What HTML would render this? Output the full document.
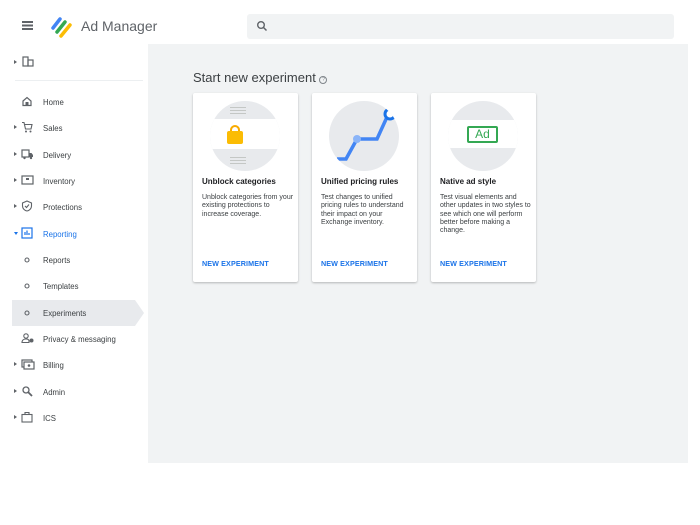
<!DOCTYPE html>
<html><head><style>
*{box-sizing:border-box;margin:0;padding:0}
body{width:700px;height:525px;background:#fff;font-family:"Liberation Sans",Arial,sans-serif;position:relative;overflow:hidden;color:#3c4043}
.abs{position:absolute}
.nav{position:absolute;left:0;width:148px;height:26px;font-size:7.8px;color:#3c4043}
.nav .t{position:absolute;left:43px;top:9px}
.nav .ar{position:absolute;left:14px;top:10px;width:0;height:0;border-top:2.5px solid transparent;border-bottom:2.5px solid transparent;border-left:3px solid #5f6368}
.nav svg{position:absolute;left:21px;top:6px}
.card{position:absolute;top:93px;width:105px;height:189px;background:#fff;box-shadow:0 1px 2px rgba(0,0,0,.25);border-radius:2px}
.card .c{position:absolute;left:17px;top:8px;width:70px;height:70px;border-radius:50%;background:#e8eaed;overflow:hidden}
.card h3{position:absolute;left:9px;top:84px;font-size:8px;font-weight:bold;color:#202124}
.card p{position:absolute;left:9px;top:101px;width:93px;font-size:7px;line-height:8.3px;color:#3c4043}
.card a{position:absolute;left:9px;top:166px;font-size:7.2px;color:#1a73e8;font-weight:bold;letter-spacing:.1px}
</style></head><body>
<div class="abs" style="left:22px;top:21px;width:11px;height:1.5px;background:#5f6368;box-shadow:0 3.5px 0 #5f6368,0 7px 0 #5f6368"></div>
<svg class="abs" style="left:49px;top:15px" width="24" height="24" viewBox="0 0 24 24">
<line x1="4" y1="13" x2="11" y2="4" stroke="#4285f4" stroke-width="3.5" stroke-linecap="round"/>
<line x1="8" y1="17" x2="16" y2="7" stroke="#34a853" stroke-width="3.5" stroke-linecap="round"/>
<line x1="12" y1="21" x2="21" y2="10" stroke="#fbbc04" stroke-width="3.5" stroke-linecap="round"/>
</svg>
<div class="abs" style="left:81px;top:18px;font-size:14px;color:#5f6368">Ad Manager</div>
<div class="abs" style="left:247px;top:14px;width:427px;height:25px;background:#f1f3f4;border-radius:3px"></div>
<svg class="abs" style="left:256px;top:20px" width="12" height="12" viewBox="0 0 12 12"><circle cx="5" cy="5" r="3.3" fill="none" stroke="#5f6368" stroke-width="1.4"/><line x1="7.4" y1="7.4" x2="10.5" y2="10.5" stroke="#5f6368" stroke-width="1.5"/></svg>
<div class="abs" style="left:148px;top:44px;width:540px;height:419px;background:#f1f3f4"></div>
<div class="abs" style="left:14px;top:60px;width:0;height:0;border-top:2.5px solid transparent;border-bottom:2.5px solid transparent;border-left:3px solid #5f6368"></div>
<svg class="abs" style="left:22px;top:56px" width="12" height="11"><rect x="1" y="1" width="5" height="9" fill="none" stroke="#5f6368" stroke-width="1.2"/><rect x="6" y="4" width="5" height="6" fill="none" stroke="#5f6368" stroke-width="1.2"/></svg>
<div class="abs" style="left:15px;top:80px;width:128px;height:1px;background:#eceff1"></div>
<div class="abs" style="left:12px;top:300px;width:123px;height:26px;background:#e8eaed"></div>
<div class="abs" style="left:135px;top:300px;width:0;height:0;border-top:13px solid transparent;border-bottom:13px solid transparent;border-left:9px solid #e8eaed"></div>

<div class="nav" style="top:89px"><svg width="12" height="12"><path d="M2 6L6 2.5L10 6V10.5H2Z" fill="none" stroke="#5f6368" stroke-width="1.2"/><rect x="4.5" y="7" width="3" height="3.5" fill="#5f6368"/></svg><span class="t">Home</span></div>
<div class="nav" style="top:115px"><i class="ar"></i><svg width="12" height="12"><path d="M1 1.5H3L4.5 8H10L11 3.5H3.5" fill="none" stroke="#5f6368" stroke-width="1.1"/><circle cx="5" cy="10.5" r="1" fill="#5f6368"/><circle cx="9.5" cy="10.5" r="1" fill="#5f6368"/></svg><span class="t">Sales</span></div>
<div class="nav" style="top:142px"><i class="ar"></i><svg width="13" height="12"><rect x="1" y="2" width="7" height="7" fill="none" stroke="#5f6368" stroke-width="1.2"/><path d="M8 5H10.5L12 7V9H8" fill="#5f6368"/><circle cx="3.5" cy="10" r="1.2" fill="#5f6368"/><circle cx="10" cy="10" r="1.2" fill="#5f6368"/></svg><span class="t">Delivery</span></div>
<div class="nav" style="top:168px"><i class="ar"></i><svg width="13" height="12"><rect x="1" y="2" width="11" height="8" fill="none" stroke="#5f6368" stroke-width="1.2"/><rect x="5" y="4" width="3" height="2" fill="#5f6368"/></svg><span class="t">Inventory</span></div>
<div class="nav" style="top:194px"><i class="ar"></i><svg width="12" height="12"><path d="M6 1L10.5 3V6C10.5 8.5 8.5 10.5 6 11C3.5 10.5 1.5 8.5 1.5 6V3Z" fill="none" stroke="#5f6368" stroke-width="1.1"/><path d="M4 6L5.5 7.5L8 4.5" fill="none" stroke="#5f6368" stroke-width="1.1"/></svg><span class="t">Protections</span></div>
<div class="nav" style="top:221px;color:#1a73e8"><i class="ar" style="border-left:2.5px solid transparent;border-right:2.5px solid transparent;border-top:3px solid #1a73e8;border-bottom:0;top:11px"></i><svg width="12" height="12"><rect x="1" y="1" width="10" height="10" fill="none" stroke="#1a73e8" stroke-width="1.2"/><path d="M4 8V5M6 8V3.5M8 8V6" stroke="#1a73e8" stroke-width="1.2"/></svg><span class="t">Reporting</span></div>
<div class="nav" style="top:247px"><svg width="12" height="12"><circle cx="6" cy="7" r="2" fill="none" stroke="#5f6368" stroke-width="1.1"/></svg><span class="t">Reports</span></div>
<div class="nav" style="top:273px"><svg width="12" height="12"><circle cx="6" cy="7" r="2" fill="none" stroke="#5f6368" stroke-width="1.1"/></svg><span class="t">Templates</span></div>
<div class="nav" style="top:300px"><svg width="12" height="12"><circle cx="6" cy="7" r="2" fill="none" stroke="#5f6368" stroke-width="1.1"/></svg><span class="t">Experiments</span></div>
<div class="nav" style="top:326px"><svg width="14" height="12"><circle cx="5" cy="4" r="2.2" fill="none" stroke="#5f6368" stroke-width="1.1"/><path d="M1 10.5C1 8 3 7 5 7S8 8 8 9V10.5H1Z" fill="none" stroke="#5f6368" stroke-width="1.1"/><circle cx="10.5" cy="8.5" r="2" fill="#5f6368"/></svg><span class="t">Privacy &amp; messaging</span></div>
<div class="nav" style="top:352px"><i class="ar"></i><svg width="14" height="12"><rect x="1" y="2" width="10" height="7" fill="none" stroke="#5f6368" stroke-width="1.2"/><rect x="3" y="4" width="10" height="7" fill="#fff" stroke="#5f6368" stroke-width="1.2"/><circle cx="8" cy="7.5" r="1.3" fill="#5f6368"/></svg><span class="t">Billing</span></div>
<div class="nav" style="top:379px"><i class="ar"></i><svg width="13" height="12"><circle cx="5" cy="5" r="3" fill="none" stroke="#5f6368" stroke-width="1.3"/><line x1="7" y1="7" x2="11" y2="11" stroke="#5f6368" stroke-width="1.8"/></svg><span class="t">Admin</span></div>
<div class="nav" style="top:405px"><i class="ar"></i><svg width="13" height="12"><rect x="1" y="3.5" width="10" height="7.5" fill="none" stroke="#5f6368" stroke-width="1.1"/><path d="M4 3.5V1.5H8V3.5" fill="none" stroke="#5f6368" stroke-width="1.1"/></svg><span class="t">ICS</span></div>

<div class="abs" style="left:193px;top:70px;font-size:13px;color:#3c4043">Start new experiment <span style="display:inline-block;width:8px;height:8px;border:1px solid #80868b;border-radius:50%;font-size:5px;line-height:6px;text-align:center;vertical-align:1px;color:#80868b">?</span></div>

<div class="card" style="left:193px">
 <div class="c">
  <div class="abs" style="left:0;top:18px;width:70px;height:30px;background:#fff"></div>
  <div class="abs" style="left:20px;top:6px;width:16px;height:1px;background:#c4c7c5;box-shadow:0 3px 0 #c4c7c5,0 6px 0 #c4c7c5"></div>
  <div class="abs" style="left:20px;top:56px;width:16px;height:1px;background:#c4c7c5;box-shadow:0 3px 0 #c4c7c5,0 6px 0 #c4c7c5"></div>
  <div class="abs" style="left:20px;top:24px;width:10px;height:9px;border:2.5px solid #f9ab00;border-bottom:none;border-radius:5px 5px 0 0"></div>
  <div class="abs" style="left:17px;top:30px;width:16px;height:13px;background:#fbbc04;border-radius:2px"></div>
 </div>
 <h3>Unblock categories</h3>
 <p>Unblock categories from your existing protections to increase coverage.</p>
 <a>NEW EXPERIMENT</a>
</div>
<div class="card" style="left:312px">
 <div class="c">
  <svg class="abs" style="left:0;top:0" width="70" height="70"><path d="M8 58H17L28 38H48L58 16" fill="none" stroke="#4285f4" stroke-width="3.5"/><circle cx="28" cy="38" r="4" fill="#8ab4f8"/><circle cx="61" cy="13" r="5" fill="#fff" stroke="#1a73e8" stroke-width="3"/></svg>
 </div>
 <h3>Unified pricing rules</h3>
 <p>Test changes to unified pricing rules to understand their impact on your Exchange inventory.</p>
 <a>NEW EXPERIMENT</a>
</div>
<div class="card" style="left:431px">
 <div class="c">
  <div class="abs" style="left:0;top:19px;width:70px;height:28px;background:#fff"></div>
  <div class="abs" style="left:19px;top:25px;width:31px;height:17px;border:2px solid #34a853;border-radius:2px;color:#34a853;font-size:12px;text-align:center;line-height:13px">Ad</div>
 </div>
 <h3>Native ad style</h3>
 <p>Test visual elements and other updates in two styles to see which one will perform better before making a change.</p>
 <a>NEW EXPERIMENT</a>
</div>
</body></html>
